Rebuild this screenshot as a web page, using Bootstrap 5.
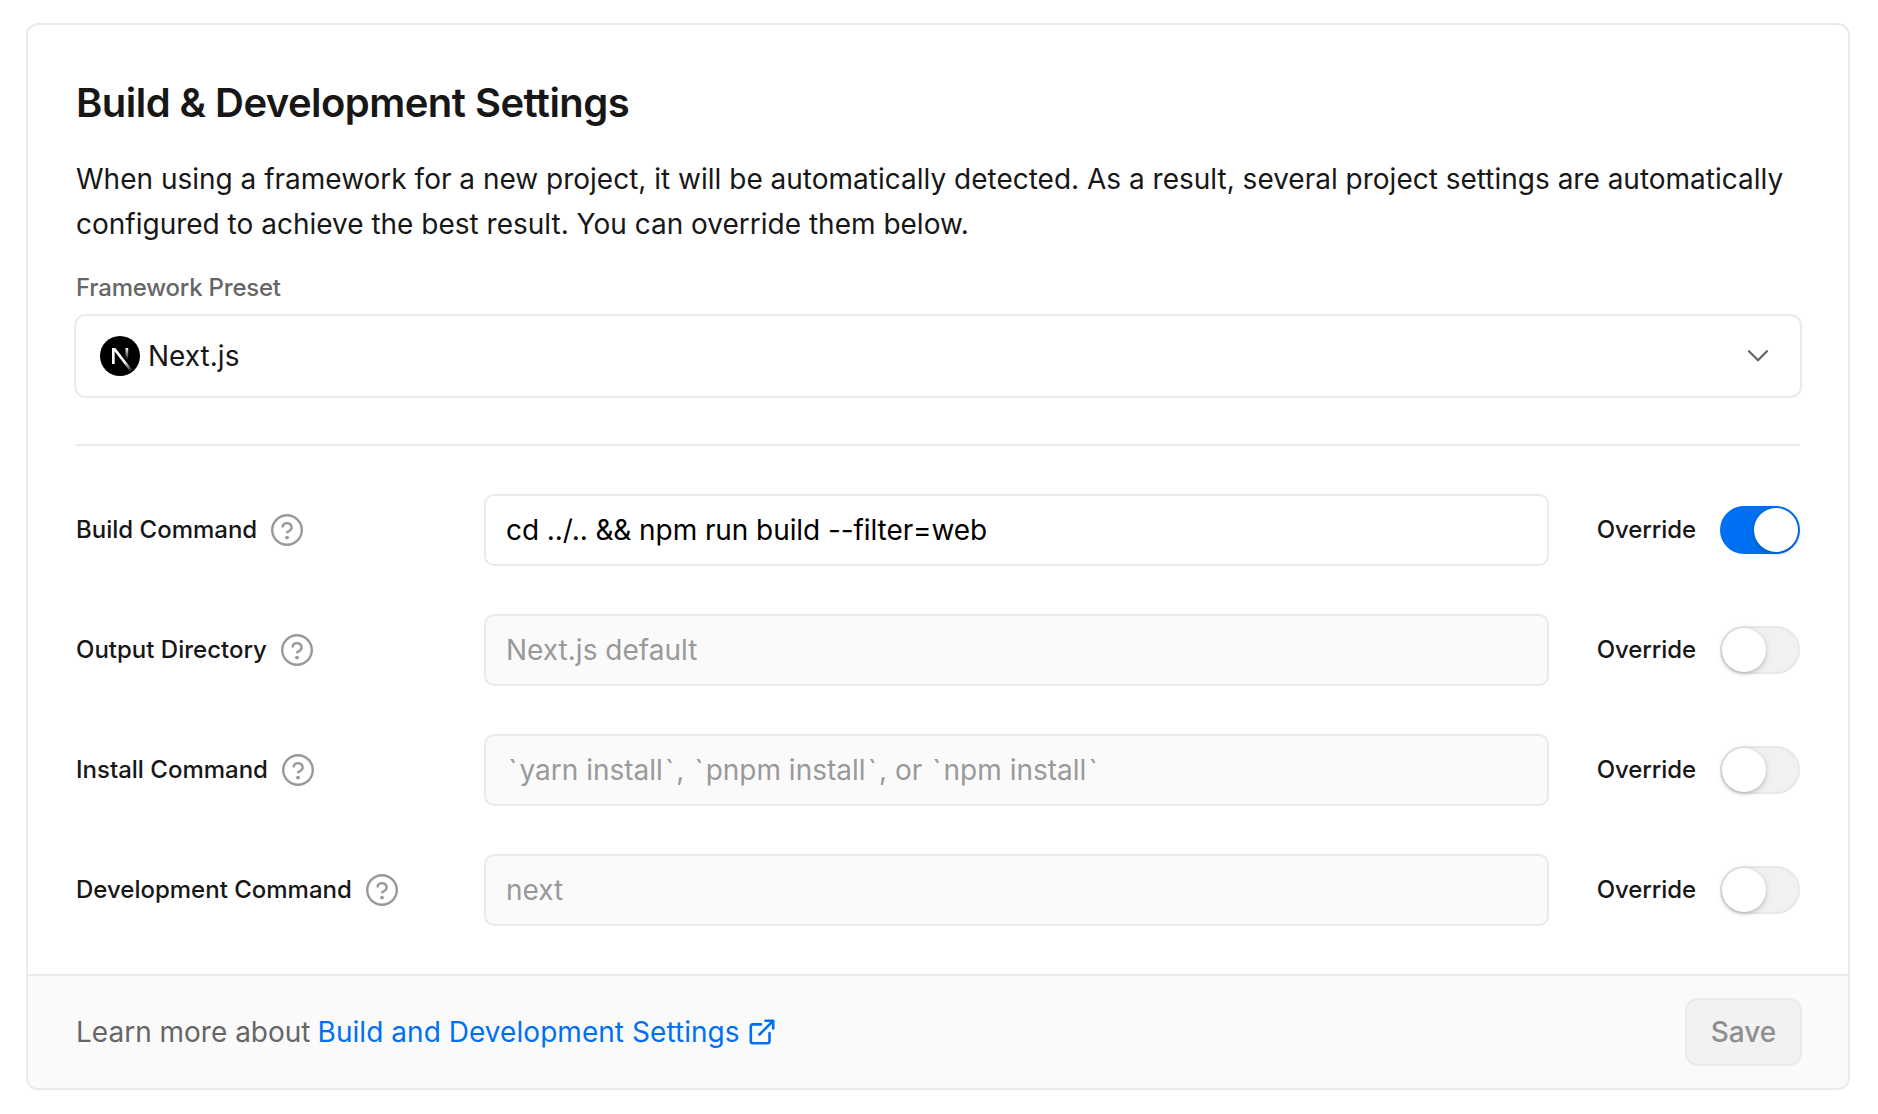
<!DOCTYPE html>
<html lang="en">
<head>
<meta charset="utf-8">
<title>Build &amp; Development Settings</title>
<link href="https://cdn.jsdelivr.net/npm/bootstrap@5.3.0/dist/css/bootstrap.min.css" rel="stylesheet">
<style>
  body { font-family: Inter, sans-serif; color: #171717; background: #fff; font-size: 28px; line-height: 45px; padding: 23px 28px 24px 26px; height: 1114px; overflow: hidden; }
  .settings-card { height: 1067px; border: 2px solid #eaeaea; border-radius: 12px; }
  .settings-card > .card-body { padding: 48px 46px 0; }
  .settings-title { font-size: 40px; line-height: 60px; font-weight: 600; letter-spacing: -.54px; margin: 0 2px 24px; }
  .settings-text { margin: 0 2px 23px; }
  .preset-label { font-size: 24px; line-height: 36px; color: #666; margin: 0 2px 8px; letter-spacing: -.22px; font-weight: 450; }
  .preset-select { height: 84px; border: 2px solid #eaeaea; border-radius: 12px; padding: 0 30px 0 24px; background: #fff; color: #171717; }
  .settings-rule { margin: 46px 2px 48px; border-top: 2px solid #eaeaea; opacity: 1; }
  .command-list { gap: 48px; margin: 0 2px; }
  .command-name { width: 408px; font-size: 24px; font-weight: 500; gap: 14px; }
  .command-name > span, .override-label { padding-bottom: 2px; }
  .command-input.form-control { width: 1065px; height: 72px; border: 2px solid #eaeaea; border-radius: 10px; font-size: 28px; padding: 0 20px; color: #000; letter-spacing: -.08px; }
  .command-input.form-control:disabled, .command-input.is-hint { background: #fafafa; letter-spacing: 0; }
  .command-input::placeholder { color: #999 !important; }
  .command-input.form-control.is-hint { color: #999; line-height: 68px; white-space: nowrap; }
  .tick { padding: 0 2.2px; }
  .override-label { font-size: 24px; font-weight: 500; letter-spacing: -.1px; }
  .toggle-track { width: 80px; height: 48px; border-radius: 24px; background: #f1f1f1; border: 2px solid #e8e8e8; display: flex; }
  .toggle-knob { width: 44px; height: 44px; border-radius: 50%; background: #fff; box-shadow: 0 2px 4px rgba(0,0,0,.2), 0 0 8px rgba(0,0,0,.06); }
  .toggle-track.is-on { background: #0070f3; border-color: #0070f3; justify-content: flex-end; }
  .settings-footer.card-footer { height: 114px; border-top: 2px solid #eaeaea; background: #fafafa; padding: 0 46px 0 48px; color: #666; border-radius: 0 0 10px 10px; }
  .settings-footer a { color: #0070f3; gap: 9px; letter-spacing: .05px; }
  .learn-line { gap: 7px; }
  .save-btn.btn { width: 117px; height: 68px; border: 2px solid #eaeaea; border-radius: 13px; background: #f2f2f2; color: #8f8f8f; font-size: 28px; font-weight: 500; opacity: 1; padding: 0; }
  svg { flex: none; display: block; }
</style>
</head>
<body>
<main class="card settings-card">
  <div class="card-body">
    <h1 class="settings-title">Build &amp; Development Settings</h1>
    <p class="settings-text">When using a framework for a new project, it will be automatically detected. As a result, several project settings are automatically configured to achieve the best result. You can override them below.</p>
    <div class="preset-label">Framework Preset</div>
    <button type="button" class="preset-select w-100 d-flex align-items-center justify-content-between">
      <span class="d-flex align-items-center gap-2">
        <svg width="40" height="40" viewBox="0 0 180 180">
          <defs>
            <linearGradient id="diag" x1="109" y1="116.5" x2="144.5" y2="160.5" gradientUnits="userSpaceOnUse"><stop stop-color="#fff"/><stop offset="1" stop-color="#fff" stop-opacity="0"/></linearGradient>
            <linearGradient id="stem" x1="121" y1="54" x2="120.8" y2="106.9" gradientUnits="userSpaceOnUse"><stop stop-color="#fff"/><stop offset="1" stop-color="#fff" stop-opacity="0"/></linearGradient>
          </defs>
          <circle cx="90" cy="90" r="90"/>
          <path fill="url(#diag)" d="M149.508 157.52L69.142 54H54v71.97h12.114V69.384l73.885 95.461a90.304 90.304 0 0 0 9.509-7.325z"/>
          <path fill="url(#stem)" d="M115 54h12v72h-12z"/>
        </svg>
        <span>Next.js</span>
      </span>
      <svg width="24" height="24" viewBox="0 0 24 24" fill="none" stroke="#666" stroke-width="2.3" stroke-linecap="round"><path d="M3 7.200 12 16.200 21 7.200"/></svg>
    </button>
    <hr class="settings-rule">
    <div class="command-list d-flex flex-column">
      <div class="d-flex align-items-center">
        <div class="command-name d-flex align-items-center"><span>Build Command</span><svg width="32" height="32" viewBox="0 0 32 32"><use href="#help"/></svg></div>
        <input class="form-control command-input" value="cd ../.. &amp;&amp; npm run build --filter=web">
        <span class="override-label ms-auto me-4">Override</span><span class="toggle-track is-on"><span class="toggle-knob"></span></span>
      </div>
      <div class="d-flex align-items-center">
        <div class="command-name d-flex align-items-center"><span>Output Directory</span><svg width="32" height="32" viewBox="0 0 32 32"><use href="#help"/></svg></div>
        <input class="form-control command-input" placeholder="Next.js default" disabled>
        <span class="override-label ms-auto me-4">Override</span><span class="toggle-track"><span class="toggle-knob"></span></span>
      </div>
      <div class="d-flex align-items-center">
        <div class="command-name d-flex align-items-center"><span>Install Command</span><svg width="32" height="32" viewBox="0 0 32 32"><use href="#help"/></svg></div>
        <div class="form-control command-input is-hint"><span class="tick">`</span>yarn install<span class="tick">`</span>, <span class="tick">`</span>pnpm install<span class="tick">`</span>, or <span class="tick">`</span>npm install<span class="tick">`</span></div>
        <span class="override-label ms-auto me-4">Override</span><span class="toggle-track"><span class="toggle-knob"></span></span>
      </div>
      <div class="d-flex align-items-center">
        <div class="command-name d-flex align-items-center"><span>Development Command</span><svg width="32" height="32" viewBox="0 0 32 32"><use href="#help"/></svg></div>
        <input class="form-control command-input" placeholder="next" disabled>
        <span class="override-label ms-auto me-4">Override</span><span class="toggle-track"><span class="toggle-knob"></span></span>
      </div>
    </div>
  </div>
  <div class="card-footer settings-footer d-flex align-items-center justify-content-between">
    <div class="learn-line d-flex align-items-center"><span>Learn more about</span>
      <a href="#" class="text-decoration-none d-flex align-items-center"><span>Build and Development Settings</span>
        <svg width="26" height="26" viewBox="0 0 26 26" fill="none" stroke="#0070f3" stroke-width="2.6" stroke-linecap="round" stroke-linejoin="round"><path d="M20.500 14v8a2.200 2.200 0 0 1-2.200 2.200H4A2.200 2.200 0 0 1 1.800 22V7.600A2.200 2.200 0 0 1 4 5.400h8M16.500 1.800h7.700v7.700M10.500 15.500 24 2"/></svg></a>
    </div>
    <button type="button" class="btn save-btn" disabled>Save</button>
  </div>
</main>
<svg width="0" height="0" class="d-none">
  <symbol id="help" viewBox="0 0 32 32"><g fill="none" stroke="#999" stroke-width="2.4" stroke-linecap="round" stroke-linejoin="round"><circle cx="16" cy="16" r="14.800"/><path d="M11.600 12.400a4.600 4.600 0 0 1 9 1.300c0 3-4.500 4.200-4.500 4.500"/></g><circle cx="16" cy="23.600" r="1.900" fill="#999"/></symbol>
</svg>
<script src="https://cdn.jsdelivr.net/npm/bootstrap@5.3.0/dist/js/bootstrap.bundle.min.js"></script>
</body>
</html>
